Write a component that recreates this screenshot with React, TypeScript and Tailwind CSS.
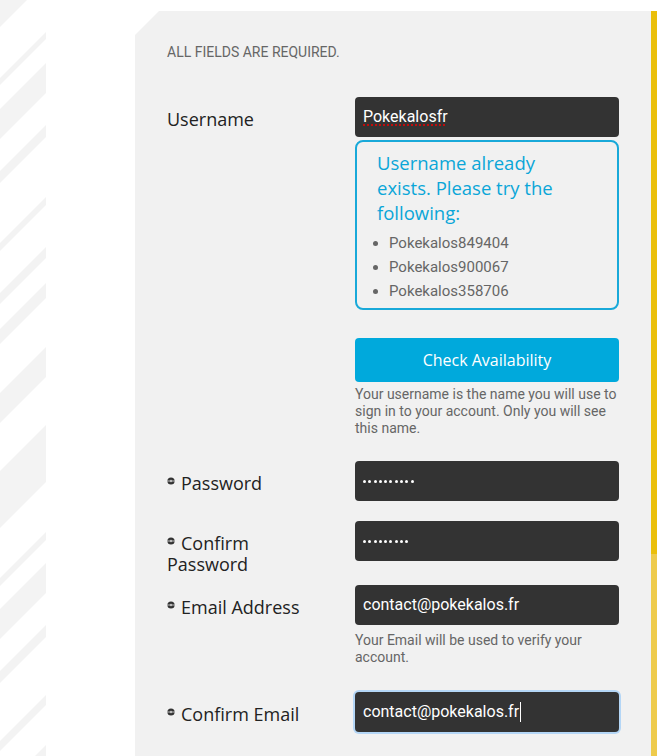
import React from "react";

const stripes: [number, number][] = [
  [-50, -19], [32, 39], [63, 93], [125, 137], [197, 205], [247, 258], [283, 298],
  [347, 377], [425, 482], [532, 540], [563, 593], [625, 637], [695, 705], [745, 790],
];

const Stripes = () => (
  <svg width="46" height="756" viewBox="0 0 46 756" className="shrink-0">
    {stripes.map(([a, b], i) => (
      <polygon key={i} points={`46,${a} 46,${b} 0,${b + 46} 0,${a + 46}`} fill="#f3f3f3" />
    ))}
  </svg>
);

const Ball = () => (
  <svg width="8" height="8" viewBox="0 0 8 8" className="inline-block mr-[6px] -mt-[8px] align-middle">
    <circle cx="4" cy="4" r="3.6" fill="#333" />
    <rect x="0" y="3.5" width="8" height="1" fill="#bbb" />
    <circle cx="4" cy="4" r="1.2" fill="#bbb" />
  </svg>
);

const Field = ({ children, focus }: { children: React.ReactNode; focus?: boolean }) => (
  <div
    className={
      "h-[40px] rounded-[4px] bg-[#333] flex items-center px-[8px] text-white text-[16px] " +
      (focus ? "ring-2 ring-[#b4d6f6]" : "")
    }
    style={{ fontFamily: "Roboto, sans-serif" }}
  >
    {children}
  </div>
);

const Dots = ({ n }: { n: number }) => (
  <div className="flex gap-[2.3px]">
    {Array.from({ length: n }).map((_, i) => (
      <div key={i} className="w-[3px] h-[3px] rounded-full bg-white" />
    ))}
  </div>
);

const labelFont = { fontFamily: '"Open Sans", sans-serif' };
const roboto = { fontFamily: "Roboto, sans-serif" };

const Label = ({ children }: { children: React.ReactNode }) => (
  <div className="w-[188px] pt-[12px] text-[18px] leading-[21px] text-[#222]" style={labelFont}>
    {children}
  </div>
);

const Help = ({ children, className }: { children: React.ReactNode; className?: string }) => (
  <p className={"text-[14px] leading-[17px] text-[#666] " + (className ?? "")} style={roboto}>
    {children}
  </p>
);

export default function App() {
  return (
    <div className="flex h-[756px] w-full overflow-hidden bg-white">
      <Stripes />
      <div
        className="ml-[89px] mt-[11px] w-[516px] bg-[#f1f1f1] pl-[32px] pt-[31px] [clip-path:polygon(24px_0,100%_0,100%_100%,0_100%,0_24px)]"
      >
        <p className="text-[14px] leading-[20px] text-[#666]" style={roboto}>
          ALL FIELDS ARE REQUIRED.
        </p>

        {/* username */}
        <div className="flex mt-[35px]">
          <Label>Username</Label>
          <div className="w-[264px]">
            <Field>
              <span className="underline decoration-dotted decoration-[#e00] underline-offset-[3px]">Pokekalosfr</span>
            </Field>
            <div className="mt-[3px] border-2 border-[#19a9d9] rounded-[8px] pt-[8px] pb-[5px]">
              <p className="ml-[20px] w-[205px] text-[18.5px] leading-[25px] text-[#0aa6d8]" style={labelFont}>
                Username already exists. Please try the following:
              </p>
              <ul className="list-disc pl-[32px] mt-[6px] text-[15px] leading-[24px] text-[#666]" style={roboto}>
                <li>Pokekalos849404</li>
                <li>Pokekalos900067</li>
                <li>Pokekalos358706</li>
              </ul>
            </div>
            <button
              className="mt-[28px] w-full h-[44px] rounded-[4px] bg-[#00a9dc] text-white text-[16px] font-medium"
              style={labelFont}
            >
              Check Availability
            </button>
            <Help className="mt-[4px]">
              Your username is the name you will use to sign in to your account. Only you will see this name.
            </Help>
          </div>
        </div>

        {/* password */}
        <div className="flex mt-[24px]">
          <Label>
            <Ball />Password
          </Label>
          <div className="w-[264px]">
            <Field>
              <Dots n={10} />
            </Field>
          </div>
        </div>

        <div className="flex mt-[20px]">
          <Label>
            <Ball />Confirm
            <br />
            Password
          </Label>
          <div className="w-[264px]">
            <Field>
              <Dots n={9} />
            </Field>
          </div>
        </div>

        {/* email */}
        <div className="flex mt-[10px]">
          <Label>
            <Ball />Email Address
          </Label>
          <div className="w-[264px]">
            <Field>contact@pokekalos.fr</Field>
            <Help className="mt-[7px]">Your Email will be used to verify your account.</Help>
          </div>
        </div>

        <div className="flex mt-[26px]">
          <Label>
            <Ball />Confirm Email
          </Label>
          <div className="w-[264px]">
            <Field focus>
              contact@pokekalos.fr<span className="ml-[1px] w-[1px] h-[20px] bg-white" />
            </Field>
          </div>
        </div>
      </div>
      <div className="mt-[11px] ml-auto w-[6px] flex flex-col">
        <div className="h-[543px] bg-[#eabf0b]" />
        <div className="flex-1 bg-[#eecb4c]" />
      </div>
    </div>
  );
}
